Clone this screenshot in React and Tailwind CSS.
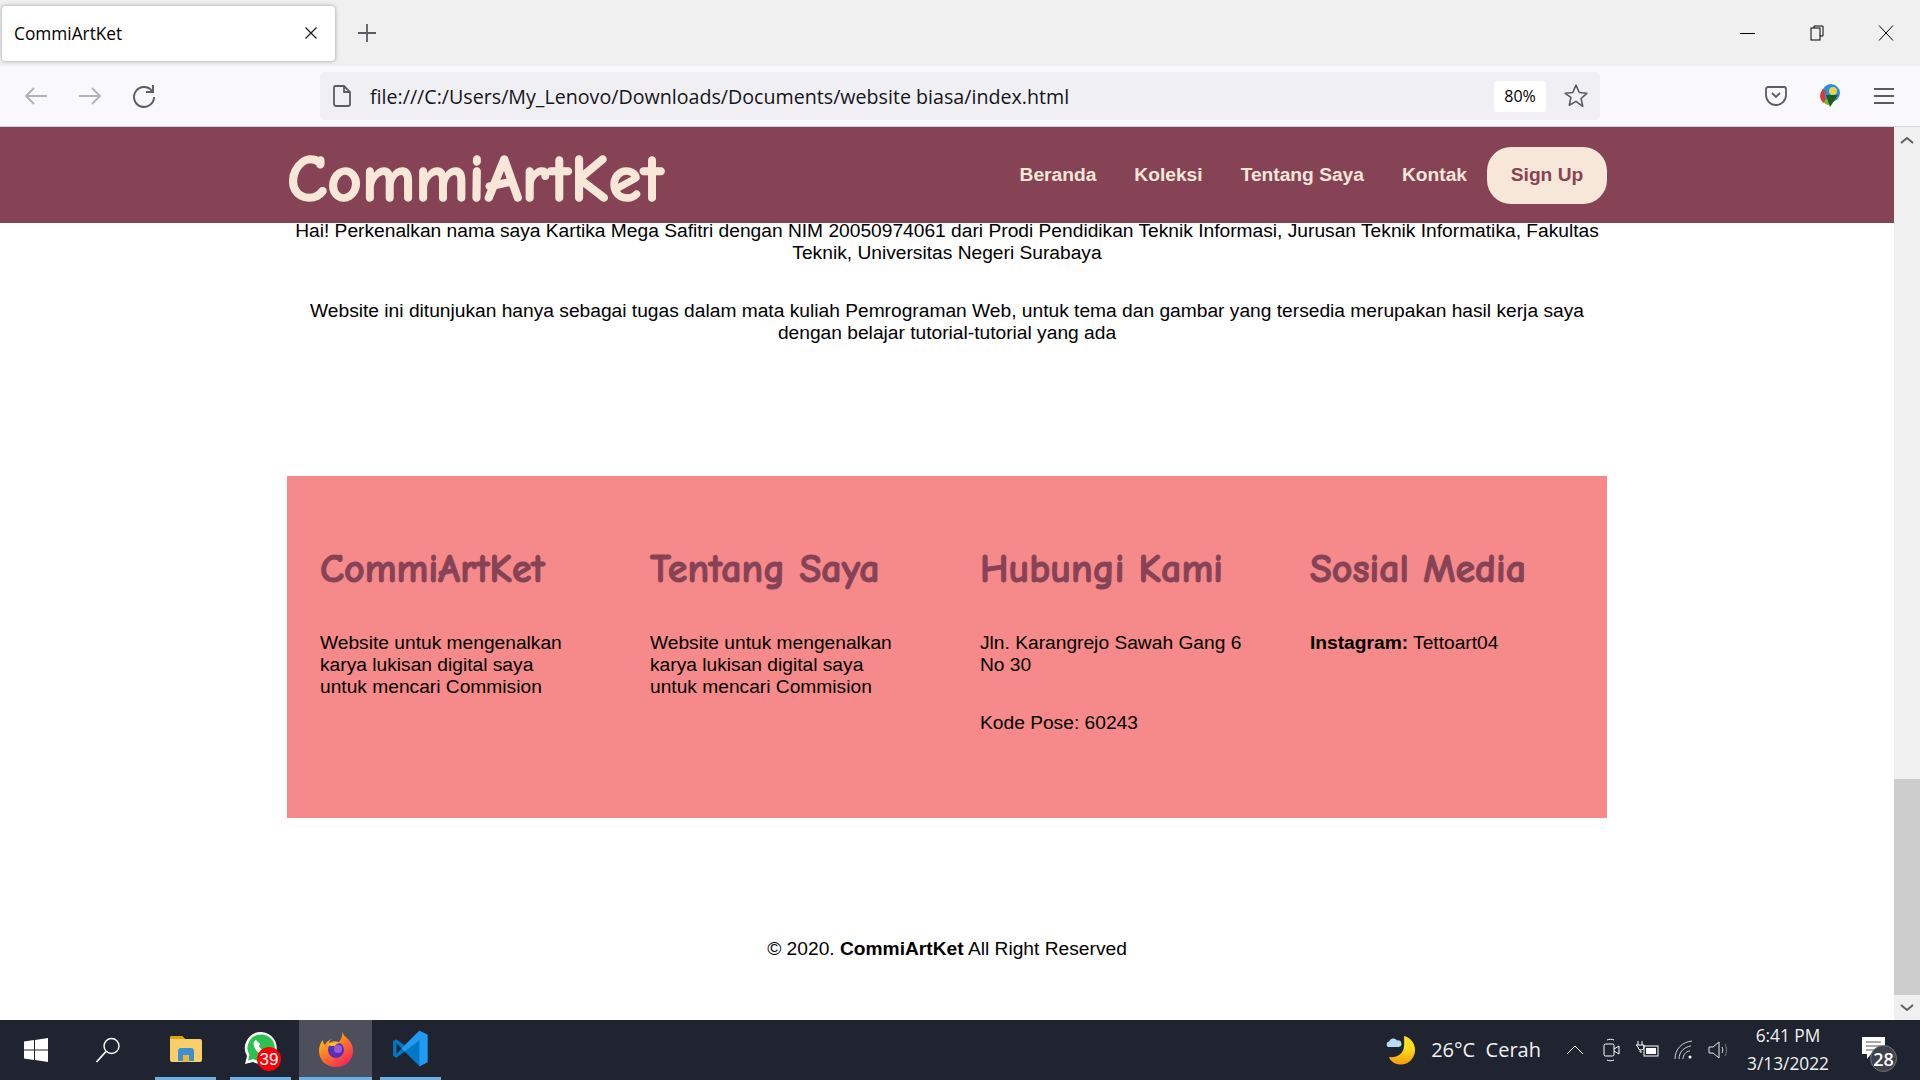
const comic = "font-['Comic_Sans_MS','Comic_Neue',cursive]";

const columns = [
  { title: 'CommiArtKet', lines: ['Website untuk mengenalkan karya lukisan digital saya untuk mencari Commision'] },
  { title: 'Tentang Saya', lines: ['Website untuk mengenalkan karya lukisan digital saya untuk mencari Commision'] },
  { title: 'Hubungi Kami', lines: ['Jln. Karangrejo Sawah Gang 6 No 30', 'Kode Pose: 60243'] },
  { title: 'Sosial Media', instagram: true },
];

function Firefox() {
  return (
    <svg width="36" height="38" viewBox="0 0 36 38">
      <defs>
        <linearGradient id="ff" x1="0" y1="0" x2="0.7" y2="1">
          <stop offset="0" stopColor="#ffe226" />
          <stop offset="0.45" stopColor="#ff8a1f" />
          <stop offset="1" stopColor="#f5265a" />
        </linearGradient>
      </defs>
      <path d="M24 1c1 4 3 5 6 8 4 4 5 8 5 12 0 9-7 16-17 16S1 30 1 21c0-4 1-8 4-11 0 3 1 4 2 5 1-3 4-5 7-6-2 1-3 3-3 4 3-2 7-2 10-1 2-3 4-6 3-11z" fill="url(#ff)" />
      <circle cx="18" cy="20" r="8" fill="#5b2fb5" />
      <path d="M10 15c3-3 8-4 13-2-3 0-5 1-6 3-3 0-5 0-7-1z" fill="#ffbd2e" />
      <circle cx="20" cy="19" r="4" fill="#9b59e0" />
    </svg>
  );
}

function Taskbar() {
  return (
    <footer className="flex h-[60px] items-stretch bg-[#1f2430] text-white">
      <div className="flex w-[72px] items-center justify-center">
        <svg width="24" height="24" viewBox="0 0 24 24" fill="#fff">
          <path d="M0 3.4 10 2v9.4H0zM11 1.900 24 0v11.400H11zM0 12.600h10V22L0 20.600zM11 12.600h13V24l-13-1.900z" />
        </svg>
      </div>
      <div className="flex w-[72px] items-center justify-center">
        <svg width="26" height="26" viewBox="0 0 26 26" fill="none" stroke="#fff" strokeWidth="1.400">
          <circle cx="16.500" cy="9" r="7.500" />
          <path d="M11 14.500 1.500 25" strokeWidth="1.800" />
        </svg>
      </div>
      <div className="ml-[11px] flex w-[61px] items-center justify-center border-b-[3px] border-[#6cb0e6]">
        <svg width="32" height="26" viewBox="0 0 32 26">
          <path d="M0 2a2 2 0 0 1 2-2h10l3 3h15a2 2 0 0 1 2 2v19a2 2 0 0 1-2 2H2a2 2 0 0 1-2-2z" fill="#f8cf68" />
          <path d="M0 2a2 2 0 0 1 2-2h10l3 3H0z" fill="#dfa40c" />
          <path d="M8 25V15a3 3 0 0 1 3-3h10a3 3 0 0 1 3 3v10h-5v-6h-6v6z" fill="#3d8fd0" />
          <rect x="13" y="19" width="6" height="7" fill="#f2b632" />
        </svg>
      </div>
      <div className="relative ml-[14px] flex w-[61px] items-center justify-center border-b-[3px] border-[#6cb0e6]">
        <svg width="34" height="34" viewBox="0 0 34 34" className="-translate-y-[1px]">
          <path d="M17 1a16 16 0 0 0-14 24L1 33l8-2a16 16 0 1 0 8-30z" fill="#fff" />
          <path d="M17 3.500a13.500 13.500 0 0 0-11.500 20.500l-1.500 5.500 5.500-1.500a13.500 13.500 0 1 0 7.500-24.500z" fill="#2bc24f" />
          <path d="M12 9c-2 1-3 3-2 6 1 4 5 8 9 9 3 1 5 0 6-2l-3-3-2 1c-2-1-4-3-5-5l1-2z" fill="#fff" />
        </svg>
        <span className="absolute left-[27px] top-[27px] flex h-6 w-6 items-center justify-center rounded-full bg-[#fb0007] font-['Liberation_Sans',sans-serif] text-[17px] leading-none">39</span>
      </div>
      <div className="ml-[8px] flex w-[73px] items-center justify-center border-b-[3px] border-[#6cb0e6] bg-[#4d505c]">
        <Firefox />
      </div>
      <div className="ml-[8px] flex w-[61px] items-center justify-center border-b-[3px] border-[#6cb0e6]">
        <svg width="37" height="37" viewBox="0 0 100 100">
          <path d="M74 2 96 13v74L74 98 34 58 12 75 3 70V30l9-5 22 17z" fill="#0078c8" />
          <path d="M74 2 96 13v74L74 98V28L34 58l-8-8z" fill="#1f9cf0" />
          <path d="M12 36v28l14-14z" fill="#1f2430" />
        </svg>
      </div>

      <div className="ml-auto flex items-center">
        <svg width="30" height="30" viewBox="0 0 30 30" className="mr-[15px]">
          <defs>
            <linearGradient id="moon" x1="0" y1="0" x2="0" y2="1">
              <stop offset="0.4" stopColor="#ffdf1f" />
              <stop offset="1" stopColor="#f59a0c" />
            </linearGradient>
          </defs>
          <path d="M18 1a14.500 14.500 0 0 1-2 28.500C10 30 5 27 3 22c8 1 14-3 15-10 .5-4 0-8 0-11z" fill="url(#moon)" />
          <path d="M2 12a3 3 0 0 1 1-5.500 4.500 4.500 0 0 1 8-1 3.300 3.300 0 0 1 2 6.500z" fill="#b7dcf5" />
        </svg>
        <span className="mr-[25px] font-['Open_Sans',sans-serif] text-[20px] text-[#f2f2f2]">26°C&nbsp; Cerah</span>
        <svg width="18" height="10" viewBox="0 0 18 10" fill="none" stroke="#fff" className="mr-[19px]"><path d="m1 9 8-8 8 8" /></svg>
        <svg width="18" height="24" viewBox="0 0 18 24" fill="none" stroke="#fff" className="mr-[14px]">
          <rect x="1" y="6" width="10" height="12" rx="1.500" />
          <path d="m11 11 5-3v8l-5-3M4 2c2-1 5-1 7 0M4 22c2 1 5 1 7 0" />
        </svg>
        <svg width="24" height="20" viewBox="0 0 24 20" className="mr-[15px]" fill="none" stroke="#fff">
          <path d="M3 1v4M7 1v4M1 5h8v2a3 3 0 0 1-6 0zM5 10v2h2" />
          <rect x="9" y="6" width="14" height="10" />
          <rect x="11" y="8" width="10" height="6" fill="#fff" stroke="none" />
        </svg>
        <svg width="20" height="20" viewBox="0 0 20 20" fill="none" stroke="#cfd2d8" className="mr-[14px]">
          <path d="M1 19C1 9 8 2 18 1M5 19c0-7 5-12 12-13M9 19c0-4 3-8 7-8" />
          <circle cx="16" cy="17" r="1.500" fill="#fff" stroke="none" />
        </svg>
        <svg width="22" height="20" viewBox="0 0 22 20" fill="none" stroke="#e5e7eb" className="mr-[12px]">
          <path d="M1 7h4l6-5v16l-6-5H1z" />
          <path d="M14 7c1 2 1 4 0 6" />
          <path d="M17 4c2 4 2 8 0 12" stroke="#777c88" />
        </svg>
        <div className="flex w-[92px] flex-col items-center font-['Open_Sans',sans-serif] text-[#f2f2f2]">
          <span className="text-[17.300px] leading-[28px]">6:41 PM</span>
          <span className="text-[17.300px] leading-[28px]">3/13/2022</span>
        </div>
        <div className="relative ml-[28px] mr-[22px] h-[40px] w-[36px]">
          <svg width="24" height="24" viewBox="0 0 24 24" className="absolute left-0 top-[7px]">
            <path d="M0 0h23v17H9l-4 5v-5H0z" fill="#fff" />
            <path d="M4 5h15M4 9h15M4 13h10" stroke="#555" />
          </svg>
          <span className="absolute left-[8px] top-[15px] flex h-[27px] w-[27px] items-center justify-center rounded-full border border-[#777] bg-[#3f424c] font-['Open_Sans',sans-serif] text-[18px] font-semibold leading-none">28</span>
        </div>
      </div>
    </footer>
  );
}

export default function App() {
  return (
    <div className="flex h-screen flex-col overflow-hidden bg-white font-['Liberation_Sans',Arial,sans-serif] text-black">
      {/* tab strip */}
      <div className="flex h-[66px] items-center bg-[#f0f0f0] font-['Open_Sans',sans-serif]">
        <div className="ml-[2px] flex h-[55px] w-[333px] items-center justify-between rounded-[4px] bg-white px-[12px] shadow-[0_0_4px_rgba(0,0,0,0.35)]">
          <span className="pt-[1px] text-[17.300px]">CommiArtKet</span>
          <svg width="14" height="14" viewBox="0 0 14 14" stroke="#222" strokeWidth="1.300" className="mr-[5px]"><path d="m1.500 1.500 11 11M12.500 1.500l-11 11" /></svg>
        </div>
        <svg width="20" height="20" viewBox="0 0 20 20" stroke="#5b5b66" strokeWidth="1.800" className="ml-[22px]"><path d="M10 1v18M1 10h18" /></svg>
        <div className="ml-auto flex items-center">
          <div className="flex w-[69px] justify-center"><div className="h-[1px] w-[15px] bg-black" /></div>
          <div className="flex w-[69px] justify-center">
            <svg width="14" height="16" viewBox="0 0 14 16" fill="none" stroke="#000"><rect x="1" y="3" width="9" height="12" /><path d="M4 3V1h9v10h-3" /></svg>
          </div>
          <div className="flex w-[69px] justify-center">
            <svg width="16" height="16" viewBox="0 0 16 16" stroke="#000"><path d="m1 .5 14 15M15 .5 1 15.500" /></svg>
          </div>
        </div>
      </div>

      {/* toolbar */}
      <div className="flex h-[61px] items-center border-b border-[#d4d4d8] bg-[#f9f9fb]">
        <div className="flex w-[320px] items-center pl-[24px]">
          <svg width="24" height="20" viewBox="0 0 24 20" fill="none" stroke="#b1b1b8" strokeWidth="1.800"><path d="M23 10H2M10 2l-8 8 8 8" /></svg>
          <svg width="24" height="20" viewBox="0 0 24 20" fill="none" stroke="#b1b1b8" strokeWidth="1.800" className="ml-[30px]"><path d="M1 10h21M14 2l8 8-8 8" /></svg>
          <svg width="24" height="24" viewBox="0 0 24 24" fill="none" stroke="#5b5b66" strokeWidth="1.900" className="ml-[30px]"><path d="M20 7a10 10 0 1 0 2 6" /><path d="M21 1v7h-7" /></svg>
        </div>
        <div className="flex h-[48px] w-[1280px] items-center rounded-[4px] bg-[#f0f0f4] font-['Open_Sans',sans-serif]">
          <svg width="18" height="22" viewBox="0 0 18 22" fill="none" stroke="#5b5b66" strokeWidth="1.800" className="ml-[13px]"><path d="M2 1h9l6 6v12a2 2 0 0 1-2 2H3a2 2 0 0 1-2-2V2zM11 1v6h6" /></svg>
          <span className="ml-[19px] pt-[2px] text-[19.650px] text-[#15141a]">file:///C:/Users/My_Lenovo/Downloads/Documents/website biasa/index.html</span>
          <span className="ml-auto flex h-[31px] w-[52px] items-center justify-center rounded-[3px] bg-white text-[16px]">80%</span>
          <svg width="26" height="26" viewBox="0 0 24 24" fill="none" stroke="#5b5b66" strokeWidth="1.500" strokeLinejoin="round" className="ml-[17px] mr-[11px]"><path d="m12 2 3 6.800 7 .7-5.300 4.800 1.500 7.200L12 17l-6.200 3.500 1.500-7.200L2 9.500l7-.7z" /></svg>
        </div>
        <div className="ml-auto flex items-center pr-[26px]">
          <svg width="22" height="20" viewBox="0 0 22 20" fill="none" stroke="#5b5b66" strokeWidth="1.800" className="mr-[30px]"><path d="M3 1h16a2 2 0 0 1 2 2v6a10 10 0 0 1-20 0V3a2 2 0 0 1 2-2z" /><path d="m7 7 4 4 4-4" /></svg>
          <svg width="26" height="26" viewBox="0 0 26 26" className="mr-[31px]">
            <circle cx="14" cy="10" r="9" fill="#2f8de0" />
            <path d="M6 6c-4 4-4 11 1 14l2-4c-2-2-2-5 0-7z" fill="#d93a34" />
            <path d="M7 20c3 2 5 2 7 2l-1-6H9z" fill="#79b82a" />
            <path d="M9 12h12l-8 12z" fill="#1d5c1a" />
            <circle cx="16" cy="8" r="4" fill="#e8d44a" />
          </svg>
          <svg width="20" height="18" viewBox="0 0 20 18" stroke="#5b5b66" strokeWidth="1.800"><path d="M0 2h20M0 9h20M0 16h20" /></svg>
        </div>
      </div>

      {/* page */}
      <div className="flex min-h-0 flex-1">
        <main className="min-w-0 flex-1 overflow-hidden">
          <header className="h-[96px] bg-[#874356]">
            <div className="mx-auto flex h-full w-[1320px] items-center justify-between">
              <span className={`${comic} pt-[8px] text-[67px] font-bold leading-none text-[#f6e7d8] [-webkit-text-stroke:1.5px_#f6e7d8]`}>CommiArtKet</span>
              <nav className="flex items-center text-[19.200px] font-bold text-[#f6e7d8]">
                <a className="mr-[38px]">Beranda</a>
                <a className="mr-[38px]">Koleksi</a>
                <a className="mr-[38px]">Tentang Saya</a>
                <a className="mr-[20px]">Kontak</a>
                <a className="flex h-[57px] w-[120px] items-center justify-center rounded-[24px] bg-[#f6e7d8] text-[#874356]">Sign Up</a>
              </nav>
            </div>
          </header>

          <section className="mx-auto w-[1320px] text-center text-[19.200px] leading-[22px]">
            <p className="mt-[-3px]">Hai! Perkenalkan nama saya Kartika Mega Safitri dengan NIM 20050974061 dari Prodi Pendidikan Teknik Informasi, Jurusan Teknik Informatika, Fakultas Teknik, Universitas Negeri Surabaya</p>
            <p className="mt-[36px]">Website ini ditunjukan hanya sebagai tugas dalam mata kuliah Pemrograman Web, untuk tema dan gambar yang tersedia merupakan hasil kerja saya dengan belajar tutorial-tutorial yang ada</p>
          </section>

          <section className="mx-auto mt-[132px] grid h-[342px] w-[1320px] grid-cols-4 bg-[#f68989] text-[19.200px] leading-[22px]">
            {columns.map((col) => (
              <div key={col.title} className="px-[33px] pt-[68px]">
                <h4 className={`${comic} h-[88px] text-[40px] font-bold leading-[50px] text-[#874356] [-webkit-text-stroke:1px_#874356]`}>{col.title}</h4>
                {col.lines?.map((line) => (
                  <p key={line} className="mb-[36px]">{line}</p>
                ))}
                {col.instagram && <p><b>Instagram:</b> Tettoart04</p>}
              </div>
            ))}
          </section>

          <p className="mt-[120px] text-center text-[19.200px] leading-[22px]">© 2020. <b>CommiArtKet</b> All Right Reserved</p>
        </main>

        {/* scrollbar */}
        <div className="flex w-[26px] flex-col bg-[#f0f0f0]">
          <div className="flex h-[26px] items-center justify-center">
            <svg width="14" height="8" viewBox="0 0 14 8" fill="none" stroke="#606060" strokeWidth="2"><path d="m1 7 6-5 6 5" /></svg>
          </div>
          <div className="flex-1" />
          <div className="h-[216px] bg-[#cdcdcd]" />
          <div className="flex h-[25px] items-center justify-center">
            <svg width="14" height="8" viewBox="0 0 14 8" fill="none" stroke="#606060" strokeWidth="2"><path d="m1 1 6 5 6-5" /></svg>
          </div>
        </div>
      </div>

      <Taskbar />
    </div>
  );
}
